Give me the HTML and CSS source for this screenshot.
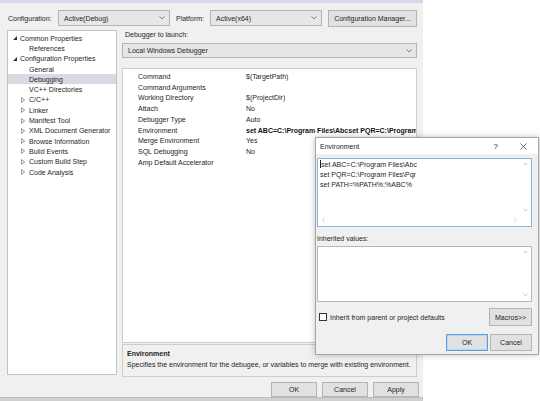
FILE: index.html
```html
<!DOCTYPE html>
<html lang="en">
<head>
    <meta charset="UTF-8">
    <title>Debugging Property Pages</title>
    <link rel="stylesheet" href="styles.css">
</head>
<body>
    <div class="window">
        <div class="toolbar">
            <span class="label label-config">Configuration:</span>
            <div class="combo combo-config">
                <span>Active(Debug)</span>
                <svg class="chevron" viewBox="0 0 6 4"><path d="M0.5 0.5 L3 3 L5.5 0.5"/></svg>
            </div>
            <span class="label label-platform">Platform:</span>
            <div class="combo combo-platform">
                <span>Active(x64)</span>
                <svg class="chevron" viewBox="0 0 6 4"><path d="M0.5 0.5 L3 3 L5.5 0.5"/></svg>
            </div>
            <button class="btn btn-manager">Configuration Manager...</button>
        </div>

        <div class="content">
            <ul class="tree">
                <li class="node"><svg class="open" viewBox="0 0 5 5"><path d="M5 0 L5 5 L0 5 Z"/></svg>Common Properties</li>
                <li class="leaf">References</li>
                <li class="node"><svg class="open" viewBox="0 0 5 5"><path d="M5 0 L5 5 L0 5 Z"/></svg>Configuration Properties</li>
                <li class="leaf">General</li>
                <li class="leaf selected">Debugging</li>
                <li class="leaf">VC++ Directories</li>
                <li class="leaf closed"><svg viewBox="0 0 5 7"><path d="M0.5 0.5 L4.5 3.5 L0.5 6.5 Z"/></svg>C/C++</li>
                <li class="leaf closed"><svg viewBox="0 0 5 7"><path d="M0.5 0.5 L4.5 3.5 L0.5 6.5 Z"/></svg>Linker</li>
                <li class="leaf closed"><svg viewBox="0 0 5 7"><path d="M0.5 0.5 L4.5 3.5 L0.5 6.5 Z"/></svg>Manifest Tool</li>
                <li class="leaf closed"><svg viewBox="0 0 5 7"><path d="M0.5 0.5 L4.5 3.5 L0.5 6.5 Z"/></svg>XML Document Generator</li>
                <li class="leaf closed"><svg viewBox="0 0 5 7"><path d="M0.5 0.5 L4.5 3.5 L0.5 6.5 Z"/></svg>Browse Information</li>
                <li class="leaf closed"><svg viewBox="0 0 5 7"><path d="M0.5 0.5 L4.5 3.5 L0.5 6.5 Z"/></svg>Build Events</li>
                <li class="leaf closed"><svg viewBox="0 0 5 7"><path d="M0.5 0.5 L4.5 3.5 L0.5 6.5 Z"/></svg>Custom Build Step</li>
                <li class="leaf closed"><svg viewBox="0 0 5 7"><path d="M0.5 0.5 L4.5 3.5 L0.5 6.5 Z"/></svg>Code Analysis</li>
            </ul>

            <div class="pane">
                <div class="pane-label">Debugger to launch:</div>
                <div class="combo combo-wide">
                    <span>Local Windows Debugger</span>
                    <svg class="chevron" viewBox="0 0 6 4"><path d="M0.5 0.5 L3 3 L5.5 0.5"/></svg>
                </div>

                <div class="grid">
                    <div class="row"><span class="name">Command</span><span class="value">$(TargetPath)</span></div>
                    <div class="row"><span class="name">Command Arguments</span><span class="value"></span></div>
                    <div class="row"><span class="name">Working Directory</span><span class="value">$(ProjectDir)</span></div>
                    <div class="row"><span class="name">Attach</span><span class="value">No</span></div>
                    <div class="row"><span class="name">Debugger Type</span><span class="value">Auto</span></div>
                    <div class="row"><span class="name">Environment</span><span class="value bold">set ABC=C:\Program Files\Abcset PQR=C:\Program</span></div>
                    <div class="row"><span class="name">Merge Environment</span><span class="value">Yes</span></div>
                    <div class="row"><span class="name">SQL Debugging</span><span class="value">No</span></div>
                    <div class="row"><span class="name">Amp Default Accelerator</span><span class="value"></span></div>
                </div>

                <div class="desc">
                    <div class="desc-title">Environment</div>
                    <div class="desc-text">Specifies the environment for the debugee, or variables to merge with existing environment.</div>
                </div>
            </div>
        </div>

        <div class="actions">
            <button class="btn btn-action">OK</button>
            <button class="btn btn-action">Cancel</button>
            <button class="btn btn-action">Apply</button>
        </div>
    </div>
    <div class="taskbar"></div>

    <div class="env-dialog">
        <div class="env-title">
            <span>Environment</span>
            <span class="env-help">?</span>
            <svg class="env-close" viewBox="0 0 8 8"><path d="M0.5 0.5 L7.5 7.5 M7.5 0.5 L0.5 7.5"/></svg>
        </div>
        <div class="env-body">
            <div class="textbox focused">
                <div class="lines">
                    <div><span class="caret"></span>set ABC=C:\Program Files\Abc</div>
                    <div>set PQR=C:\Program Files\Pqr</div>
                    <div>set PATH=%PATH%;%ABC%</div>
                </div>
                <svg class="sb sb-up" viewBox="0 0 6 4"><path d="M0.5 3.5 L3 1 L5.5 3.5"/></svg>
                <svg class="sb sb-down" viewBox="0 0 6 4"><path d="M0.5 0.5 L3 3 L5.5 0.5"/></svg>
                <svg class="sb sb-left" viewBox="0 0 4 6"><path d="M3.5 0.5 L1 3 L3.5 5.5"/></svg>
                <svg class="sb sb-right" viewBox="0 0 4 6"><path d="M0.5 0.5 L3 3 L0.5 5.5"/></svg>
            </div>

            <div class="env-label">Inherited values:</div>
            <div class="textbox inherited">
                <svg class="sb sb-up" viewBox="0 0 6 4"><path d="M0.5 3.5 L3 1 L5.5 3.5"/></svg>
                <svg class="sb sb-down" viewBox="0 0 6 4"><path d="M0.5 0.5 L3 3 L5.5 0.5"/></svg>
            </div>

            <div class="env-options">
                <label class="check"><span class="box"></span>Inherit from parent or project defaults</label>
                <button class="btn btn-macros">Macros&gt;&gt;</button>
            </div>

            <div class="env-actions">
                <button class="btn btn-env default">OK</button>
                <button class="btn btn-env">Cancel</button>
            </div>
        </div>
    </div>
</body>
</html>
```

FILE: styles.css
```css
body {
    margin: 0;
    width: 540px;
    height: 401px;
    overflow: hidden;
    background: #ffffff;
    font-family: "Liberation Sans", Arial, sans-serif;
    font-size: 7px;
    color: #252525;
    position: relative;
}

.window {
    width: 423px;
    height: 394px;
    background: #f0f0f0;
    border-top: 3px solid #d6d6ec;
}

/* top row: configuration / platform */
.toolbar {
    display: flex;
    align-items: center;
    height: 16px;
    padding: 7px 0 0 8px;
}

.label-config {
    width: 50px;
}

.label-platform {
    width: 34px;
    margin-left: 6px;
}

.combo {
    display: flex;
    align-items: center;
    justify-content: space-between;
    box-sizing: border-box;
    height: 16px;
    padding: 0 4px 0 5px;
    background: #e6e6e6;
    border: 1px solid #b4b4b4;
}

.combo-config,
.combo-platform {
    width: 112px;
}

.chevron {
    width: 6px;
    height: 4px;
    fill: none;
    stroke: #707070;
    stroke-width: 0.9;
}

.btn {
    box-sizing: border-box;
    margin: 0;
    padding: 0;
    font: inherit;
    color: #252525;
    background: #e1e1e1;
    border: 1px solid #b4b4b4;
}

.btn-manager {
    width: 89px;
    height: 17px;
    margin-left: 6px;
}

.content {
    display: flex;
    margin-top: 4px;
}

/* left tree */
.tree {
    list-style: none;
    margin: 0 0 0 7px;
    padding: 2px 0 0;
    box-sizing: border-box;
    width: 110px;
    height: 345px;
    background: #ffffff;
    border: 1px solid #c4c4c4;
}

.tree li {
    display: flex;
    align-items: center;
    height: 10.3px;
    white-space: nowrap;
}

.tree .node {
    padding-left: 5px;
}

.tree .node svg {
    width: 4px;
    height: 4px;
    margin-right: 3px;
    fill: #333333;
}

.tree .leaf {
    padding-left: 21px;
}

.tree .closed {
    padding-left: 13px;
}

.tree .closed svg {
    width: 4px;
    height: 6px;
    margin-right: 4px;
    fill: none;
    stroke: #555555;
    stroke-width: 0.8;
}

.tree .selected {
    background: #d9d9e4;
}

/* right side */
.pane {
    margin-left: 5px;
    width: 295px;
}

.pane-label {
    height: 10px;
    line-height: 10px;
    padding-left: 3px;
}

.combo-wide {
    width: 295px;
    height: 15px;
    margin-top: 3px;
}

.grid {
    box-sizing: border-box;
    height: 275px;
    margin-top: 10px;
    padding-top: 2px;
    background: #ffffff;
    border: 1px solid #cdcdcd;
    overflow: hidden;
}

.row {
    display: flex;
    align-items: center;
    height: 10.75px;
    white-space: nowrap;
}

.row .name {
    flex: none;
    width: 108px;
    padding-left: 15px;
}

.row .value.bold {
    font-weight: bold;
    color: #111111;
}

.desc {
    box-sizing: border-box;
    height: 33px;
    margin-top: 1px;
    padding: 4px 4px 0;
    border: 1px solid #cdcdcd;
}

.desc-title {
    font-weight: bold;
    line-height: 9px;
}

.desc-text {
    margin-top: 2px;
    line-height: 9px;
    white-space: nowrap;
}

.actions {
    display: flex;
    justify-content: flex-end;
    gap: 5px;
    padding: 5px 4px 0 0;
}

.btn-action {
    width: 46px;
    height: 15px;
}

.taskbar {
    height: 4px;
    background: #cfcfcf;
    border-top: 1px solid #bdbdbd;
    width: 423px;
}

/* Environment popup */
.env-dialog {
    position: absolute;
    left: 315px;
    top: 137px;
    width: 224px;
    height: 218px;
    box-sizing: border-box;
    background: #f0f0f0;
    border: 1px solid #a5a5a5;
    box-shadow: 0 0 6px rgba(0, 0, 0, 0.25);
}

.env-title {
    display: flex;
    align-items: center;
    height: 16px;
    padding-left: 4px;
    background: #ffffff;
}

.env-help {
    margin-left: auto;
    font-size: 8px;
}

.env-close {
    width: 7px;
    height: 7px;
    margin: 0 11px 0 22px;
    stroke: #333333;
    stroke-width: 0.8;
}

.env-body {
    padding: 4px 6px 0 1px;
}

.textbox {
    position: relative;
    box-sizing: border-box;
    background: #ffffff;
    border: 1px solid #b9b9b9;
}

.textbox.focused {
    height: 69px;
    border-color: #89b6e0;
}

.lines {
    padding: 1px 0 0 2px;
    line-height: 10px;
}

.caret {
    display: inline-block;
    width: 1px;
    height: 8px;
    vertical-align: -1px;
    background: #222222;
}

.sb {
    position: absolute;
    fill: none;
    stroke: #a8a8a8;
    stroke-width: 0.8;
}

.sb-up, .sb-down {
    right: 3px;
    width: 5px;
    height: 4px;
}

.sb-up {
    top: 3px;
}

.focused .sb-down {
    bottom: 14px;
}

.sb-left, .sb-right {
    bottom: 4px;
    width: 3px;
    height: 5px;
}

.sb-left {
    left: 4px;
}

.sb-right {
    right: 14px;
}

.env-label {
    margin-top: 7px;
    line-height: 10px;
}

.textbox.inherited {
    height: 56px;
    margin-top: 2px;
}

.inherited .sb-down {
    bottom: 4px;
}

.env-options {
    display: flex;
    align-items: center;
    justify-content: space-between;
    margin-top: 6px;
}

.check {
    display: flex;
    align-items: center;
    padding-left: 2px;
}

.check .box {
    box-sizing: border-box;
    width: 8px;
    height: 8px;
    margin-right: 3px;
    background: #ffffff;
    border: 1px solid #333333;
}

.btn-macros {
    width: 43px;
    height: 18px;
}

.env-actions {
    display: flex;
    justify-content: flex-end;
    gap: 2px;
    margin-top: 8px;
}

.btn-env {
    width: 42px;
    height: 17px;
}

.btn-env.default {
    border-color: #5a9fd8;
    box-shadow: inset 0 0 0 1px #b7d6f2;
}
```
